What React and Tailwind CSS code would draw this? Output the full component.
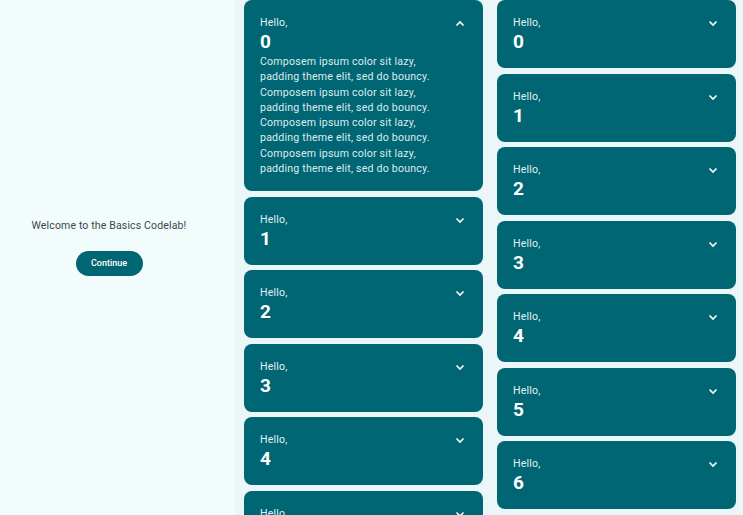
import React, { useState } from 'react';

const body = 'Composem ipsum color sit lazy, padding theme elit, sed do bouncy. '.repeat(4).trim();

const Chevron = ({ up }) => (
  <svg width="10" height="7" viewBox="0 0 10 7" className="mt-[6px]">
    <polyline
      points={up ? '1.5,5.5 5,2 8.5,5.5' : '1.5,1.5 5,5 8.5,1.5'}
      fill="none"
      stroke="#ffffff"
      strokeWidth="1.6"
    />
  </svg>
);

const Greeting = ({ name, open, onToggle }) => (
  <div className="bg-[#006674] rounded-[8px] pl-[16px] pr-[18px] pt-[14px] pb-[15px] flex items-start justify-between shrink-0">
    <div className="flex flex-col">
      <span className="text-[10.5px] leading-[17px] tracking-[0.2px] text-[#e3f1f3]">Hello,</span>
      <span className="text-[19px] leading-[22px] font-bold text-white">{name}</span>
      {open && (
        <p className="text-[10.6px] leading-[15.3px] tracking-[0.2px] text-[#dcecee] w-[175px] mt-[1px]">
          {body}
        </p>
      )}
    </div>
    <button onClick={onToggle} className="p-0">
      <Chevron up={open} />
    </button>
  </div>
);

const GreetingList = ({ first, className }) => {
  const [opened, setOpened] = useState(first);
  const items = [0, 1, 2, 3, 4, 5, 6, 7];
  return (
    <div className={`flex flex-col gap-[5.5px] ${className}`}>
      {items.map(i => (
        <Greeting
          key={i}
          name={i}
          open={opened.includes(i)}
          onToggle={() =>
            setOpened(opened.includes(i) ? opened.filter(x => x !== i) : [...opened, i])
          }
        />
      ))}
    </div>
  );
};

const App = () => {
  return (
    <div
      className="w-[743px] h-[515px] overflow-hidden flex bg-[#eaf6f8]"
      style={{ fontFamily: 'Roboto, "Liberation Sans", sans-serif' }}
    >
      <div className="w-[234px] shrink-0 bg-[#f2fcfd] flex flex-col items-center pt-[218px] pr-[16px]">
        <p className="text-[10.5px] leading-[16px] tracking-[0.15px] text-[#3a4749]">Welcome to the Basics Codelab!</p>
        <button className="mt-[17px] w-[67px] h-[25px] rounded-full bg-[#006674] text-white text-[9px] font-medium">
          Continue
        </button>
      </div>
      <GreetingList first={[0]} className="w-[239px] ml-[10px]" />
      <GreetingList first={[]} className="w-[239px] ml-[14px]" />
    </div>
  );
};

export default App;
